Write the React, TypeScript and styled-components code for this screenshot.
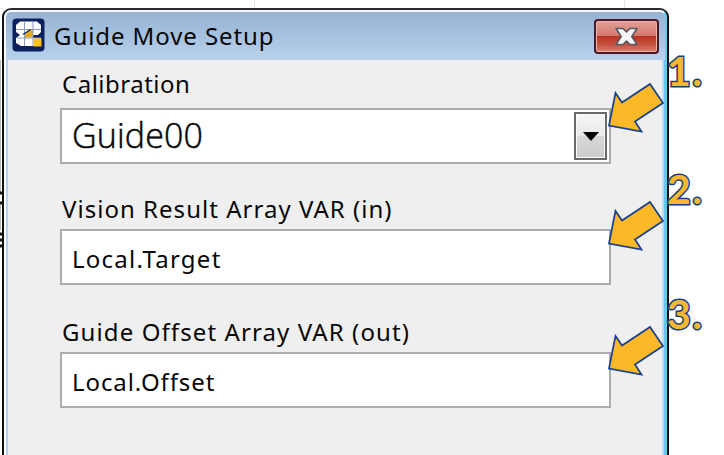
import React from "react";
import styled, { createGlobalStyle } from "styled-components";

const Global = createGlobalStyle`
  * { box-sizing: border-box; }
  body { margin: 0; background: #fff; overflow: hidden; }
`;

const Stage = styled.main`
  position: relative;
  width: 724px;
  height: 455px;
  overflow: hidden;
  padding: 8px 0 0 2px;
  background: linear-gradient(#e4e4e4, #e4e4e4) 254px 0 / 1px 8px no-repeat,
    linear-gradient(#e4e4e4, #e4e4e4) 624px 0 / 1px 8px no-repeat,
    linear-gradient(#ececec, #ececec) 0 8px / 3px 1px no-repeat, #fff;
  font-family: "Noto Sans", "Open Sans", sans-serif;
  font-variant-ligatures: none;
  color: #080808;
`;

const Dialog = styled.section`
  width: 667px;
  height: 460px;
  border: 2px solid #111;
  border-top-color: #2c2c30;
  border-radius: 9px 9px 0 0;
  background: linear-gradient(90deg, #f8fcff 0 2px, #b9d0ed 2px 4px, #efefef 4px 658px, #b8d9ee 658px 660px, #5fcbee 660px);
  overflow: hidden;
`;

const TitleBar = styled.header`
  display: flex;
  align-items: center;
  height: 50px;
  padding: 0 6px 2px 6px;
  border-top: 2px solid #f4f8fc;
  border-left: 2px solid #f4faff;
  border-right: 2px solid #62d0ee;
  border-radius: 7px 7px 0 0;
  background: linear-gradient(#98b4d2, #a5c0df 45%, #b9d1ec);
`;

const Caption = styled.h1<{ $spacing: number }>`
  flex: 1;
  margin: 2px 0 0 9px;
  font-size: 24px;
  font-weight: 400;
  line-height: 30px;
  letter-spacing: ${(p) => p.$spacing}px;
  white-space: nowrap;
`;

const CloseButton = styled.button`
  display: grid;
  place-items: center;
  width: 65px;
  height: 35px;
  margin-top: 2px;
  padding: 0;
  border: 2px solid #4b1723;
  border-radius: 4px;
  background: linear-gradient(#e2a199, #d5786d 47%, #bb3423 50%, #c4513f 75%, #d78072);
  box-shadow: inset 0 0 0 1px #e9b5ad;
`;

const Form = styled.div`
  padding: 10px 0 0 56px;
`;

const Field = styled.div<{ $gap: number }>`
  width: 551px;
  margin-bottom: ${(p) => p.$gap}px;
`;

const Label = styled.label<{ $height: number; $spacing: number }>`
  display: block;
  height: ${(p) => p.$height}px;
  padding-left: 2px;
  font-size: 24px;
  line-height: 28px;
  letter-spacing: ${(p) => p.$spacing}px;
  white-space: nowrap;
`;

const Box = styled.div<{ $spacing: number }>`
  display: flex;
  align-items: center;
  justify-content: space-between;
  height: 56px;
  padding: 4px 2px 0 10px;
  border: 2px solid #acacb0;
  background: #fff;
  font-size: 24px;
  line-height: 40px;
  letter-spacing: ${(p) => p.$spacing}px;
`;

const SelectBox = styled(Box)`
  padding-top: 0;
  font-family: "Open Sans", sans-serif;
  font-size: 34px;
  font-weight: 300;
  line-height: 38px;
  -webkit-text-stroke: 0.5px #080808;
`;

const Choice = styled.span`
  padding-bottom: 2px;
`;

const DropButton = styled.button`
  display: grid;
  place-items: center;
  width: 33px;
  height: 48px;
  padding: 0;
  border: 2px solid #69696b;
  background: linear-gradient(#f5f5f5, #e9e9e9 49%, #d8d8d8 51%, #cbcbcb);
  box-shadow: inset 0 0 0 1px #fafafa;
`;

const Callout = styled.div<{ $top: number }>`
  position: absolute;
  left: 606px;
  top: ${(p) => p.$top}px;
  width: 118px;
  height: 84px;
`;

const Pointer = styled.svg`
  position: absolute;
  inset: 0;
`;

const StepNumber = styled.span`
  position: absolute;
  left: 61px;
  top: -3px;
  font: 700 41px/48px Lato, sans-serif;
  letter-spacing: 1.5px;
  color: #f5b82e;
  -webkit-text-stroke: 3px #163f83;
  paint-order: stroke fill;
`;

const AppIcon = () => (
  <svg width="33" height="34" viewBox="0 0 33 34">
    <rect x=".5" y=".5" width="32" height="33" rx="4" fill="#0b205c" />
    <path d="M8 3.5H25L29 7V14L26 17H21V20H29V28H9L4 25V20L8 17L4 14V7Z" fill="#fff" />
    <path d="M12.5 19.5V16L18 11H21V19.5Z" fill="#e3aa1b" />
    <path d="M12.5 4V28M21 4V28M4 11.5H29M5 20H29" stroke="#8c9bc4" strokeWidth="1" />
    <path d="M11 16.5L18.5 11.5" stroke="#10265f" strokeWidth="1.4" fill="none" />
    <rect x="21.5" y="20.5" width="8" height="8" fill="#fcc419" />
  </svg>
);

const CloseGlyph = () => (
  <svg width="25" height="19" viewBox="0 0 25 19">
    <path d="M2 1.5H9L12.5 4.8L16 1.5H23L17.8 9.5L23 17.5H16L12.5 14.2L9 17.5H2L7.2 9.5Z" fill="#f6f6f7" stroke="#595965" strokeWidth="1.6" strokeLinejoin="round" />
  </svg>
);

const Step = ({ top, n }: { top: number; n: number }) => (
  <Callout $top={top}>
    <StepNumber>{n}.</StepNumber>
    <Pointer width="64" height="84" viewBox="0 0 64 84">
      <path d="M3 75.5L9.5 43L16 52.5L44 34L57 53L29 71.5L35.5 81.5Z" fill="#fdb827" stroke="#17418a" strokeWidth="1.7" />
    </Pointer>
  </Callout>
);

const BackdropEdge = styled.svg`
  position: absolute;
  left: 0;
  top: 60px;
`;

export default function App() {
  return (
    <>
      <Global />
      <Stage>
        <Dialog>
          <TitleBar>
            <AppIcon />
            <Caption $spacing={0.92}>Guide Move Setup</Caption>
            <CloseButton aria-label="Close"><CloseGlyph /></CloseButton>
          </TitleBar>
          <Form>
            <Field $gap={31}>
              <Label $height={38} $spacing={0.5}>Calibration</Label>
              <SelectBox $spacing={0.15}>
                <Choice>Guide00</Choice>
                <DropButton aria-label="Open list">
                  <svg width="16" height="9" viewBox="0 0 16 9"><path d="M0 0H16L8 9Z" fill="#050505" /></svg>
                </DropButton>
              </SelectBox>
            </Field>
            <Field $gap={33}>
              <Label $height={34} $spacing={1.03}>Vision Result Array VAR (in)</Label>
              <Box $spacing={1.25}>Local.Target</Box>
            </Field>
            <Field $gap={0}>
              <Label $height={34} $spacing={1.1}>Guide Offset Array VAR (out)</Label>
              <Box $spacing={0.9}>Local.Offset</Box>
            </Field>
          </Form>
        </Dialog>
        <BackdropEdge width="3" height="395" viewBox="0 0 3 395">
          <path d="M0 0V133M0 145V170M1.5 132H3" stroke="#777" strokeWidth="1" />
          <path d="M0 133H3M0 143H3M0 174H3M0 180H3M0 186H3" stroke="#111" strokeWidth="3" />
        </BackdropEdge>
        <Step top={50} n={1} />
        <Step top={168} n={2} />
        <Step top={293} n={3} />
      </Stage>
    </>
  );
}
